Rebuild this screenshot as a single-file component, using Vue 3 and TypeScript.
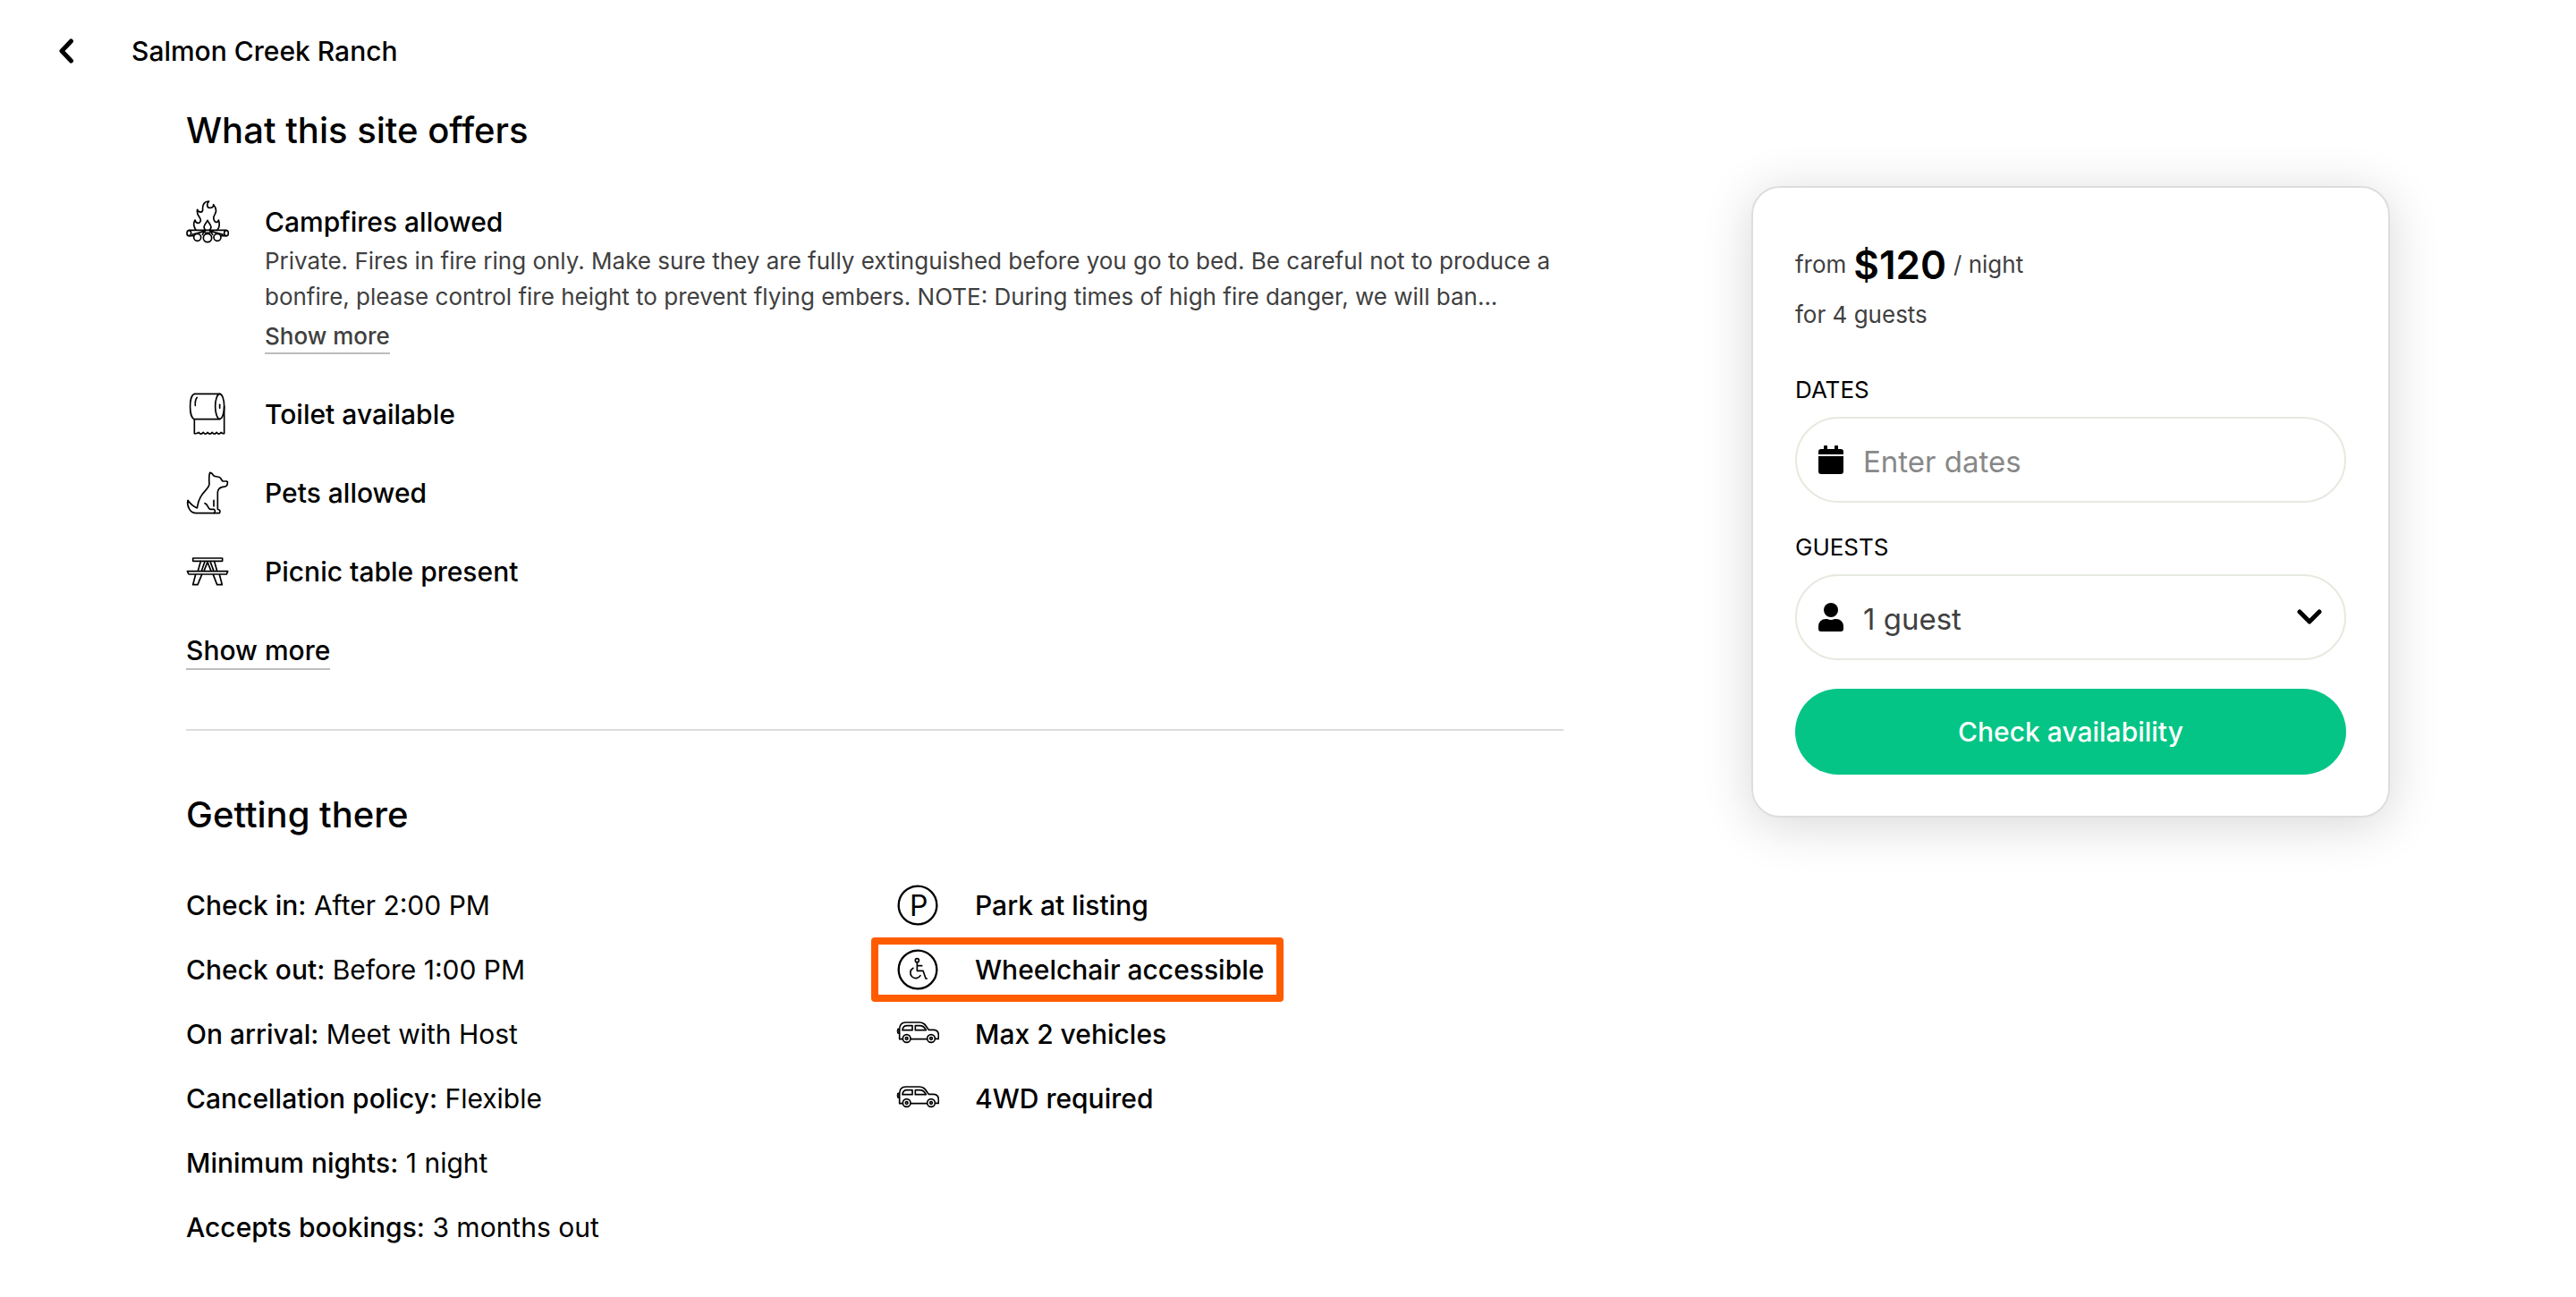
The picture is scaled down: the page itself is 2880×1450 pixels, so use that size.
<script setup lang="ts">
import { ref } from 'vue'

interface Fact {
  label: string
  value: string
}

const facts: Fact[] = [
  { label: 'Check in:', value: 'After 2:00 PM' },
  { label: 'Check out:', value: 'Before 1:00 PM' },
  { label: 'On arrival:', value: 'Meet with Host' },
  { label: 'Cancellation policy:', value: 'Flexible' },
  { label: 'Minimum nights:', value: '1 night' },
  { label: 'Accepts bookings:', value: '3 months out' },
]

const vehicleNotes: string[] = ['Max 2 vehicles', '4WD required']
const guestOptions: string[] = ['1 guest', '2 guests', '3 guests', '4 guests']

const dates = ref('')
const guests = ref(guestOptions[0])
</script>

<template>
  <div class="page">
    <header class="topbar">
      <button class="back" type="button" aria-label="Back">
        <svg viewBox="0 0 18 30" width="18" height="30" fill="none" stroke="currentColor" stroke-width="5" stroke-linecap="round" stroke-linejoin="round">
          <path d="M14.500 4 4 15l10.500 11" />
        </svg>
      </button>
      <h1>Salmon Creek Ranch</h1>
    </header>

    <div class="content">
      <main>
        <section class="offers">
          <h2>What this site offers</h2>
          <ul class="amenities">
            <li class="amenity detailed">
              <svg class="icon" viewBox="54 70 144 144">
                <path d="M87 169C77 156 79 145 84 136C87 148 98 149 102 141C109 129 86 122 92 101C97 112 110 113 110 100C108 84 117 72 131 73C122 80 124 95 133 95C141 95 146 91 146 84C157 97 157 106 151 116C143 129 147 136 150 140C156 146 162 142 163 136C168 150 166 160 159 169" />
                <path d="M119 169C107 158 121 148 126 137C131 148 145 158 133 169" />
                <path d="M64 170H189M64 189H79M172 189H189M118 173 76 184M134 173 177 184M117 171 109 185M135 171 143 185M118 179H134" />
                <ellipse cx="64" cy="180" rx="7" ry="9" />
                <ellipse cx="189" cy="180" rx="7" ry="9" />
                <circle cx="92" cy="194" r="12" />
                <circle cx="159" cy="194" r="12" />
                <circle cx="126" cy="196" r="14" fill="#fff" />
              </svg>
              <div>
                <h3>Campfires allowed</h3>
                <p>
                  Private. Fires in fire ring only. Make sure they are fully extinguished before you go to bed. Be careful not to produce a<br />
                  bonfire, please control fire height to prevent flying embers. NOTE: During times of high fire danger, we will ban...
                </p>
                <a class="more small" href="#">Show more</a>
              </div>
            </li>
            <li class="amenity">
              <svg class="icon" viewBox="54 57 144 144">
                <path d="M167 61H82C63 66 63 141 82 146H167" />
                <ellipse cx="167" cy="103" rx="15" ry="42" />
                <path d="M167 97V109" stroke-width="5" />
                <path d="M91 73C86 79 84 88 85 100" stroke-width="5" />
                <path d="M82 147V194Q90 195 96 190Q104 201 112 190Q119 201 126 190Q134 201 142 190Q149 201 157 190Q164 201 171 190Q176 195 182 194V103" />
              </svg>
              <h3>Toilet available</h3>
            </li>
            <li class="amenity">
              <svg class="icon" viewBox="54 50 144 144">
                <path d="M60 147C56 166 67 190 88 190H166C170 184 168 178 160 177V120C161 108 166 104 177 102C189 102 194 98 193 85L190 83H177C173 80 172 69 160 68C151 67 148 66 146 64C143 58 139 54 134 54C131 62 131 78 132 92C132 112 98 119 91 173C79 168 69 160 60 147Z" />
                <path d="M117 157C127 160 126 172 134 177H147C153 180 152 186 148 190M147 147V167" />
              </svg>
              <h3>Pets allowed</h3>
            </li>
            <li class="amenity">
              <svg class="icon" viewBox="54 50 144 144">
                <rect x="77" y="77" width="99" height="10" rx="1" />
                <path d="M58 121H194L190 131H63ZM103 88 94 120M114 120 126 90 138 120M117 88 106 120M135 88 147 120M149 88 158 120M86 132 77 166H93L107 132M145 132 158 166H175L166 132" />
              </svg>
              <h3>Picnic table present</h3>
            </li>
          </ul>
          <a class="more" href="#">Show more</a>
        </section>

        <section class="getting">
          <h2>Getting there</h2>
          <div class="columns">
            <ul class="facts">
              <li v-for="fact in facts" :key="fact.label">
                <strong>{{ fact.label }}</strong>&nbsp;{{ fact.value }}
              </li>
            </ul>
            <ul class="access">
              <li>
                <svg class="icon" viewBox="124 25 144 144">
                  <circle cx="196" cy="97" r="64" stroke-width="7" />
                  <text x="200" y="132" text-anchor="middle">P</text>
                </svg>
                <strong>Park at listing</strong>
              </li>
              <li class="highlighted">
                <svg class="icon" viewBox="126 242 144 144">
                  <circle cx="198" cy="314" r="64" stroke-width="7" />
                  <circle cx="196" cy="283" r="6" />
                  <path d="M196 290V318H216L225 344H229M196 301H212M183 309A18 18 0 1 0 207 334" />
                </svg>
                <strong>Wheelchair accessible</strong>
              </li>
              <li v-for="note in vehicleNotes" :key="note">
                <svg class="icon" viewBox="126 457 144 144">
                  <path d="M147 546H137V514C137 499 145 490 158 490H204C222 490 226 504 235 515H250C262 515 268 522 268 533V545H258M176 546H229" />
                  <path d="M147 516C148 505 154 501 162 501H180V516ZM190 501H205C217 501 222 508 226 516H190Z" />
                  <path d="M134 511H131Q128 519 131 527H134Z" fill="currentColor" stroke-width="3" />
                  <circle cx="161" cy="544" r="13" />
                  <circle cx="161" cy="544" r="4" />
                  <circle cx="243" cy="544" r="13" />
                  <circle cx="243" cy="544" r="4" />
                </svg>
                <strong>{{ note }}</strong>
              </li>
            </ul>
          </div>
        </section>
      </main>

      <aside>
        <form class="card" @submit.prevent>
          <div class="price"><span>from</span><b>$120</b><span>/ night</span></div>
          <div class="party">for 4 guests</div>

          <label for="dates">DATES</label>
          <div class="field">
            <svg viewBox="0 0 28 32" width="28" height="32" fill="currentColor">
              <path d="M0 10V7a3 3 0 0 1 3-3h3V1a1 1 0 0 1 1-1h2a1 1 0 0 1 1 1v3h8V1a1 1 0 0 1 1-1h2a1 1 0 0 1 1 1v3h3a3 3 0 0 1 3 3v3ZM0 12h28v17a3 3 0 0 1-3 3H3a3 3 0 0 1-3-3Z" />
            </svg>
            <input id="dates" v-model="dates" type="text" placeholder="Enter dates" />
          </div>

          <label class="second" for="guests">GUESTS</label>
          <div class="field">
            <svg viewBox="0 0 28 32" width="28" height="32" fill="currentColor">
              <circle cx="14" cy="8" r="8" />
              <path d="M8 18h2q4 2 8 0h2a8 8 0 0 1 8 8v3a3 3 0 0 1-3 3H3a3 3 0 0 1-3-3v-3a8 8 0 0 1 8-8Z" />
            </svg>
            <select id="guests" v-model="guests">
              <option v-for="option in guestOptions" :key="option">{{ option }}</option>
            </select>
            <svg viewBox="0 0 28 18" width="28" height="18" fill="none" stroke="currentColor" stroke-width="5" stroke-linecap="round" stroke-linejoin="round">
              <path d="M3 3 14 14 25 3" />
            </svg>
          </div>

          <button class="submit" type="submit">Check availability</button>
        </form>
      </aside>
    </div>
  </div>
</template>

<style>
body {
  margin: 0;
  background: #fff;
}
</style>

<style scoped>
.page {
  font-family: Inter, "Liberation Sans", sans-serif;
  font-size: 30px;
  line-height: 40px;
  color: #000;
}

.page * {
  box-sizing: border-box;
}

h1,
h2,
h3,
p,
ul {
  margin: 0;
  padding: 0;
}

ul {
  list-style: none;
}

h1,
h2,
h3,
strong {
  font-weight: 500;
}

h1,
h3 {
  font-size: 30px;
}

h2 {
  font-size: 40px;
  line-height: 48px;
}

.topbar {
  display: flex;
  align-items: center;
  gap: 64px;
  height: 114px;
  padding: 0 65px;
}

.back {
  display: flex;
  padding: 0;
  border: 0;
  background: none;
  color: inherit;
}

.content {
  display: grid;
  grid-template-columns: minmax(0, 1540fr) minmax(0, 714fr);
  gap: 210px;
  padding: 0 208px;
}

.offers {
  padding: 8px 0 66px;
  border-bottom: 2px solid #ddd;
}

.amenities {
  display: flex;
  flex-direction: column;
  gap: 40px;
  margin: 54px 0 44px;
}

.amenity {
  display: flex;
  gap: 40px;
}

.amenity h3 {
  line-height: 48px;
}

.detailed {
  padding-bottom: 3px;
}

.amenity p {
  font-size: 26px;
  color: #404040;
  white-space: nowrap;
}

.icon {
  flex: none;
  width: 48px;
  height: 48px;
  fill: none;
  stroke: currentColor;
  stroke-width: 5;
  stroke-linejoin: round;
  stroke-linecap: round;
}

.icon text {
  font-size: 96px;
  fill: currentColor;
  stroke: none;
}

.more {
  display: block;
  width: fit-content;
  border-bottom: 2px solid #bdbdbd;
  font-weight: 500;
  color: inherit;
  text-decoration: none;
}

.small {
  margin-top: 6px;
  font-size: 26px;
  line-height: 36px;
  color: #404040;
}

.getting {
  padding: 70px 0 28px;
}

.columns {
  display: grid;
  grid-template-columns: 1fr 1fr;
  gap: 48px;
  margin-top: 41px;
}

.facts li,
.access li {
  display: flex;
  align-items: center;
  height: 72px;
}

.access li {
  position: relative;
  width: fit-content;
  gap: 40px;
}

.highlighted::after {
  content: "";
  position: absolute;
  inset: 0 -22px 0 -28px;
  border: 8px solid #ff5c00;
  border-radius: 4px;
}

.card {
  display: flex;
  flex-direction: column;
  margin-top: 94px;
  padding: 58px 47px 46px;
  border: 2px solid #ddd;
  border-radius: 32px;
  box-shadow: 0 8px 56px rgba(0, 0, 0, 0.16);
}

.price {
  display: flex;
  align-items: center;
  gap: 8px;
  height: 56px;
  font-size: 26px;
  color: #404040;
}

.price b {
  font-size: 44px;
  font-weight: 600;
  color: #000;
}

.party {
  margin: 8px 0 48px;
  font-size: 26px;
  color: #404040;
}

label {
  margin-bottom: 14px;
  font-size: 26px;
  line-height: 32px;
}

.second {
  margin-top: 34px;
}

.field {
  display: flex;
  align-items: center;
  gap: 22px;
  height: 96px;
  padding: 0 25px 0 24px;
  border: 2px solid #e5eadf;
  border-radius: 48px;
}

input,
select {
  flex: 1;
  min-width: 0;
  padding: 3px 0 0;
  border: 0;
  outline: 0;
  appearance: none;
  background: none;
  font-family: inherit;
  font-size: 33px;
  line-height: 48px;
  color: #404040;
}

input::placeholder {
  color: #888;
  opacity: 1;
}

.submit {
  height: 96px;
  margin-top: 32px;
  border: 0;
  border-radius: 48px;
  background: #04c585;
  font-family: inherit;
  font-size: 30px;
  font-weight: 500;
  color: #fff;
}
</style>
